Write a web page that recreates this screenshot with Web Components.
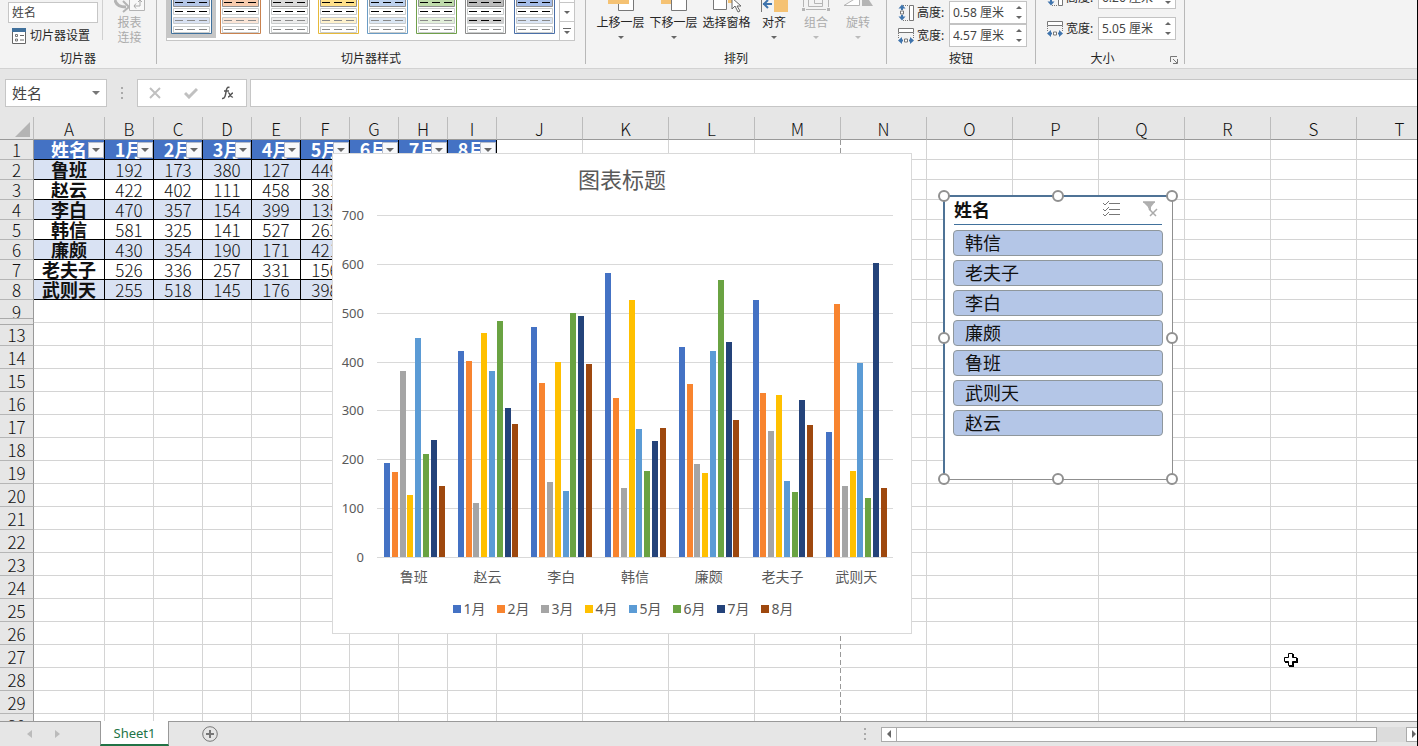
<!DOCTYPE html>
<html lang="zh-CN">
<head>
<meta charset="utf-8">
<title>Sheet1</title>
<style>
  html, body { height: 100%; margin: 0; overflow: hidden; }
  body { font-family: "Noto Sans", "Noto Sans CJK SC", sans-serif; font-size: 12px; color: #262626; }
</style>
</head>
<body>
<sheet-app></sheet-app>

<script>
const MONTHS = ["1月", "2月", "3月", "4月", "5月", "6月", "7月", "8月"]
const COLORS = ["#4472c4", "#f8842f", "#a5a5a5", "#ffc000", "#5b9bd5", "#6aa342", "#24437a", "#9e480e"]
const DATA = [
  ["鲁班", 192, 173, 380, 127, 449, 210, 240, 146],
  ["赵云", 422, 402, 111, 458, 381, 484, 304, 273],
  ["李白", 470, 357, 154, 399, 135, 500, 493, 396],
  ["韩信", 581, 325, 141, 527, 263, 175, 238, 265],
  ["廉颇", 430, 354, 190, 171, 421, 566, 441, 281],
  ["老夫子", 526, 336, 257, 331, 156, 134, 322, 271],
  ["武则天", 255, 518, 145, 176, 398, 121, 601, 142]
]

// small helper, every element here has an open shadow root
class BaseElement extends HTMLElement {
  connectedCallback() {
    if (this.shadowRoot) return
    this.attachShadow({ mode: "open" })
    this.shadowRoot.innerHTML = `
    <style>
      * { box-sizing: border-box; }
      :host { box-sizing: border-box; }
      button, input { font: inherit; color: inherit; margin: 0; padding: 0; border: 0; background: none; }
      svg { display: block; flex: none; }
    </style>` + this.render()
  }
}

// ribbon ----------------------------------------------------------------
class RibbonGroup extends BaseElement {
  render() {
    return `
    <style>
      :host { display: flex; flex: none; height: 68px; }
      .group { display: flex; flex-direction: column; }
      .body { display: flex; align-items: flex-end; height: 50px; padding: 0 0 0 8px; }
      :host([pad="wide"]) .body { padding: 0 10px 0 9px; }
      :host([pad="tight"]) .body { padding: 0 7px 0 8px; }
      :host([pad="field"]) .body { padding: 0 8px 0 11px; }
      footer { display: flex; align-items: center; height: 18px; line-height: 18px; }
      footer span { flex: 1; text-align: center; }
      .sep { width: 1px; margin-bottom: 4px; background: #b8b8b8; }
      .more { width: 12px; height: 12px; margin-right: 3px; }
    </style>
    <div class="group">
      <div class="body"><slot></slot></div>
      <footer>
        <span>${this.getAttribute("label")}</span>
        ${this.hasAttribute("launcher") ? `<button class="more" aria-label="更多">
          <svg width="12" height="12" fill="none" stroke="#777"><path d="M1.5 9V3.500H8M4 6l4 4M8.500 6v4.500H4"/></svg>
        </button>` : ""}
      </footer>
    </div>
    <div class="sep"></div>`
  }
}
customElements.define("ribbon-group", RibbonGroup)

class RibbonButton extends BaseElement {
  render() {
    const off = this.hasAttribute("disabled")
    return `
    <style>
      :host { display: block; flex: none; width: 53px; }
      :host([small]) { width: 42px; }
      button { display: flex; flex-direction: column; align-items: center; width: 100%; height: 50px; line-height: 16px; white-space: nowrap; }
      button:disabled { color: #ababab; }
      .icon { height: 15px; }
      .arrow { margin-top: 5px; border: 3px solid transparent; border-top-color: #666; }
      button:disabled .arrow { border-top-color: #bbb; }
    </style>
    <button ${off ? "disabled" : ""}>
      <span class="icon"><slot name="icon"></slot></span>
      <span><slot></slot></span>
      ${this.hasAttribute("plain") ? "" : `<span class="arrow"></span>`}
    </button>`
  }
}
customElements.define("ribbon-button", RibbonButton)

class SizeField extends BaseElement {
  render() {
    const tall = `<path d="M4 2v4M4 11v4" stroke="#3f74ad" stroke-width="2"/><path d="M0.500 4.500 4 0.500l3.500 4zM0.500 12.500 4 16.500l3.500-4z" fill="#3f74ad"/><path d="M2.500 7h3v3h-3zM11.500 1.500h4v15h-4z" fill="#fff" stroke="#777"/><path d="M5 1.500h6M5 16.500h6" stroke="#777" stroke-dasharray="1 1"/>`
    const wide = `<path d="M0.500 1.500h15v4h-15zM6.500 12h3v3h-3z" fill="#fff" stroke="#777"/><path d="M0.500 6v5M15.500 6v5" stroke="#777" stroke-dasharray="1 1"/><path d="M2 13.500h3M11 13.500h3" stroke="#3f74ad" stroke-width="2"/><path d="M4 10 0 13.500 4 17zM12 10l4 3.500L12 17z" fill="#3f74ad"/>`
    return `
    <style>
      :host { display: flex; align-items: center; gap: 3px; height: 23px; }
      label { width: 29px; white-space: nowrap; line-height: 20px; }
      .box { display: flex; width: 78px; height: 23px; border: 1px solid #c3c3c3; background: #fff; }
      input { flex: 1; min-width: 0; padding: 0 0 2px 3px; color: #444; outline: 0; }
      .spin { display: flex; flex-direction: column; width: 15px; }
      .spin button { flex: 1; display: grid; place-items: center; }
    </style>
    <svg width="16" height="18" fill="none">${this.getAttribute("kind") === "tall" ? tall : wide}</svg>
    <label for="field">${this.getAttribute("label")}</label>
    <div class="box">
      <input id="field" type="text" value="${this.getAttribute("value")}">
      <div class="spin">
        <button aria-label="增加"><svg width="6" height="3" fill="#666"><path d="M0 3 3 0l3 3z"/></svg></button>
        <button aria-label="减少"><svg width="6" height="3" fill="#666"><path d="M0 0l3 3 3-3z"/></svg></button>
      </div>
    </div>`
  }
}
customElements.define("size-field", SizeField)

class StyleGallery extends BaseElement {
  thumb([line, head, band, dark]) {
    const dashes = (y, color) => `<path d="M4 ${y}h8M16 ${y}h8M28 ${y}h8" stroke="${color}"/>`
    return `
    <svg width="41" height="34">
      <path d="M0.500 0v33.500h40V0" fill="#fff" stroke="${line}"/>
      <path d="M2.500 -1h36v7.500h-36z" fill="${head}" stroke="#8e8e8e"/>
      <path d="M2.500 8.500h36v6h-36zM2.500 26.500h36v6h-36z" fill="#fff" stroke="#c9cccc"/>
      <path d="M2.500 17.500h36v6h-36z" fill="${band}" stroke="#c9cccc"/>
      ${dashes(2.5, "#000")}${dashes(11.5, "#000")}${dashes(20.5, dark || "#888")}${dashes(29.5, "#888")}
    </svg>`
  }
  render() {
    const styles = [
      ["#41719c", "#b4c6e7", "#d9e2f3"],
      ["#c9824f", "#f8cbad", "#fbe5d6"],
      ["#a0a0a0", "#dbdbdb", "#ededed"],
      ["#e6b93a", "#ffe18a", "#fff2cc"],
      ["#6b9cc4", "#bdd1ee", "#dbe7f4"],
      ["#70a04a", "#bfdcab", "#e2efda"],
      ["#8b8b8b", "#bcbcbc", "#d0d0d0", "#000"],
      ["#4a6fa8", "#a5bde9", "#dae5f5"]
    ]
    return `
    <style>
      :host { display: flex; height: 41px; margin-bottom: 9px; border: 1px solid #c6c6c6; border-top: 0; background: #fff; }
      .item { display: flex; justify-content: center; align-items: flex-start; width: 49px; height: 38px; }
      .item.on { background: #c6c6c6; }
      .scroll { display: flex; flex-direction: column; width: 15px; border-left: 1px solid #c6c6c6; }
      .scroll button { display: grid; place-items: center; height: 19px; border-top: 1px solid #c6c6c6; }
      .scroll button:first-child { height: 2px; border: 0; }
    </style>
    ${styles.map((s, i) => `<button class="item ${i ? "" : "on"}" aria-label="样式 ${i + 1}">${this.thumb(s)}</button>`).join("")}
    <div class="scroll">
      <button aria-label="上"></button>
      <button aria-label="下"><svg width="6" height="3" fill="#666"><path d="M0 0l3 3 3-3z"/></svg></button>
      <button aria-label="其他"><svg width="8" height="7" fill="#666"><path d="M0 0h8v1H0zM1 3l3 3 3-3z"/></svg></button>
    </div>`
  }
}
customElements.define("style-gallery", StyleGallery)

class AppRibbon extends BaseElement {
  render() {
    return `
    <style>
      :host { display: flex; flex: none; height: 69px; overflow: hidden; background: #f3f3f3; border-bottom: 1px solid #d2d2d2; }
      .caption { display: flex; flex-direction: column; gap: 4px; width: 94px; padding-bottom: 6px; }
      .caption input { width: 90px; height: 21px; padding: 0 0 2px 3px; border: 1px solid #c6c6c6; background: #fff; color: #444; outline: 0; }
      .caption button { display: flex; align-items: center; gap: 3px; height: 17px; margin-left: 4px; line-height: 17px; white-space: nowrap; }
      .line { width: 1px; height: 40px; margin-bottom: 10px; background: #d0d0d0; }
      .report { width: 53px; height: 50px; line-height: 15px; color: #ababab; display: flex; flex-direction: column; align-items: center; gap: 2px; }
      .fields { display: flex; flex-direction: column; padding-bottom: 3px; }
      .fields.loose { gap: 8px; padding-bottom: 10px; }
    </style>
    <ribbon-group label="切片器">
      <div class="caption">
        <input type="text" value="姓名" aria-label="切片器题注">
        <button>
          <svg width="15" height="16" fill="none"><path d="M0.500 1v14.500h13V1" fill="#fff" stroke="#666"/><path d="M0 0h14v4H0z" fill="#41719c"/><path d="M3.500 6.500h2v2h-2zM3.500 11h2v2h-2z" stroke="#777"/><path d="M8 7.500h4M8 12h4" stroke="#666"/></svg>
          切片器设置
        </button>
      </div>
      <div class="line"></div>
      <button class="report" disabled>
        <svg width="31" height="13" fill="none"><path d="M1 0c1 5 5 7 11 7" stroke="#b4b4b4" stroke-width="3"/><path d="M9 1l6 6-6 5" stroke="#b4b4b4" stroke-width="2"/><path d="M15.500 -1v11.500h15V-1" fill="#f8f8f8" stroke="#b4b4b4"/><path d="M20 6h6V0M22 3.500 20 6l2 2.500M24 2l2-2 2 2" stroke="#aaa"/></svg>
        <span>报表<br>连接</span>
      </button>
    </ribbon-group>
    <ribbon-group label="切片器样式" pad="wide">
      <style-gallery></style-gallery>
    </ribbon-group>
    <ribbon-group label="排列" pad="tight">
      <ribbon-button>
        <svg slot="icon" width="26" height="11" fill="none"><path d="M10.500 -1v11.500h15V-1" fill="#fff" stroke="#777"/><path d="M0 0h21v4H0z" fill="#f5c273"/></svg>
        上移一层
      </ribbon-button>
      <ribbon-button>
        <svg slot="icon" width="26" height="11" fill="none"><path d="M0 0h20v4H0z" fill="#f5c273"/><path d="M10.500 -1v11.500h15V-1" fill="#fff" stroke="#777"/></svg>
        下移一层
      </ribbon-button>
      <ribbon-button plain>
        <svg slot="icon" width="28" height="13" fill="none"><path d="M0.500 -1v10.500h13V-1" fill="#fff" stroke="#777"/><path d="M15 0h4v3h-4z" fill="#f5c273"/><path d="M19 -2v11l3-3 3 6 2-1-3-5h4z" fill="#fff" stroke="#666"/></svg>
        选择窗格
      </ribbon-button>
      <ribbon-button small>
        <svg slot="icon" width="27" height="12" fill="none"><path d="M0.500 0v12" stroke="#777"/><path d="M2 4h9M7 0 3 4l4 4" stroke="#3f74ad" stroke-width="2"/><path d="M13 0h14v12H13z" fill="#f5c273"/></svg>
        对齐
      </ribbon-button>
      <ribbon-button small disabled>
        <svg slot="icon" width="28" height="12" fill="none" stroke="#b5b5b5"><path d="M1.500 0v7M26.500 0v7M4 9.500h20M6.500 0v6.500h14V0M12.500 0v3.500h8"/><path d="M0 8h3v3H0zM25 8h3v3h-3z" fill="#b5b5b5" stroke="none"/></svg>
        组合
      </ribbon-button>
      <ribbon-button small disabled>
        <svg slot="icon" width="31" height="7" fill="none"><path d="M1 5.500h15.500V-4z" fill="#fff" stroke="#b5b5b5"/><path d="M19 0h7l4 6H19z" fill="#b5b5b5"/></svg>
        旋转
      </ribbon-button>
    </ribbon-group>
    <ribbon-group label="按钮" pad="field">
      <div class="fields">
        <size-field kind="tall" label="高度:" value="0.58 厘米"></size-field>
        <size-field kind="wide" label="宽度:" value="4.57 厘米"></size-field>
      </div>
    </ribbon-group>
    <ribbon-group label="大小" pad="field" launcher>
      <div class="fields loose">
        <size-field kind="tall" label="高度:" value="6.26 厘米"></size-field>
        <size-field kind="wide" label="宽度:" value="5.05 厘米"></size-field>
      </div>
    </ribbon-group>`
  }
}
customElements.define("app-ribbon", AppRibbon)

// formula bar ----------------------------------------------------------------
class FormulaBar extends BaseElement {
  render() {
    return `
    <style>
      :host { display: flex; flex: none; height: 48px; padding: 10px 0 10px 5px; background: #e6e6e6; }
      .name { display: flex; width: 102px; border: 1px solid #c6c6c6; background: #fff; }
      .name input { flex: 1; min-width: 0; padding: 0 0 2px 6px; font-size: 15px; color: #444; outline: 0; }
      .name button { width: 20px; display: grid; place-items: center; }
      .dots { width: 30px; display: grid; place-items: center; }
      .tools { display: flex; align-items: center; justify-content: space-around; width: 110px; border: 1px solid #c6c6c6; background: #fff; }
      .formula { flex: 1; min-width: 0; margin-left: 3px; padding: 0 6px; border: 1px solid #c6c6c6; border-right: 0; background: #fff; outline: 0; }
    </style>
    <div class="name">
      <input type="text" value="姓名" aria-label="名称框">
      <button aria-label="展开"><svg width="8" height="4" fill="#777"><path d="M0 0h8L4 4z"/></svg></button>
    </div>
    <div class="dots"><svg width="2" height="12" fill="#aaa"><path d="M0 0h2v2H0zM0 5h2v2H0zM0 10h2v2H0z"/></svg></div>
    <div class="tools">
      <button aria-label="取消"><svg width="12" height="12" stroke="#c0c0c0" stroke-width="2"><path d="M1 1l10 10M11 1 1 11"/></svg></button>
      <button aria-label="输入"><svg width="14" height="12" fill="none" stroke="#c0c0c0" stroke-width="3"><path d="M1 6l4 4 8-8"/></svg></button>
      <button aria-label="插入函数"><svg width="14" height="14" fill="none" stroke="#555"><path d="M8.500 1.500C6 0.500 5.500 3 5 6S4 13 1 12.500M3 5h5" stroke-width="1.500"/><path d="M7 7c2-1 2 5 5 4M12 7c-2 0-3 4-5 4" stroke-width="1.300"/></svg></button>
    </div>
    <input class="formula" type="text" aria-label="编辑栏">`
  }
}
customElements.define("formula-bar", FormulaBar)

// grid ----------------------------------------------------------------
class SheetGrid extends BaseElement {
  render() {
    const letters = "ABCDEFGHIJKLMNOPQRST".split("")
    const rows = [1, 2, 3, 4, 5, 6, 7, 8, 9]
    for (let n = 13; n <= 30; n++) rows.push(n)

    const cells = (n) => letters.map((l, i) => {
      if (n > 8 || i > 8) return "<td></td>"
      if (n === 1) {
        return `<td class="d">${i ? MONTHS[i - 1] : "姓名"}<button aria-label="筛选"><svg width="8" height="4" fill="#666"><path d="M0 0h8L4 4z"/></svg></button></td>`
      }
      return `<td class="d">${DATA[n - 2][i]}</td>`
    }).join("")

    return `
    <style>
      :host { display: block; font-family: "Noto Sans CJK SC", sans-serif; font-size: 17px; font-weight: 300; color: #111; }
      table { position: relative; table-layout: fixed; width: 1443px; border-collapse: separate; border-spacing: 0; background: #fff; }
      th, td { position: relative; padding: 2px 0 0; height: 23px; line-height: 20px; text-align: center; white-space: nowrap; border-right: 1px solid #d4d4d4; border-bottom: 1px solid #d4d4d4; }
      th { font-weight: 300; background: #e6e6e6; }
      thead th { border-right-color: #bcbcbc; border-bottom-color: #999; }
      tbody th { border-right-color: #999; border-bottom-color: #b5b5b5; }
      .corner svg { margin: 0 3px 0 auto; }
      .data th, .data td { height: 20px; padding: 0; line-height: 19px; }
      .data .d { border-color: #000; }
      .data:nth-child(even) .d { background: #d9e2f3; }
      .data .d:nth-child(2) { font-size: 18px; font-weight: 700; }
      .data:first-child .d { background: #4472c4; color: #fff; font-size: 18px; font-weight: 700; }
      td button { position: absolute; right: 0; bottom: 1px; width: 16px; height: 16px; display: grid; place-items: center; border: 1px solid #b5bccb; background: #f8f9fb; }
      /* rows 10-12 are hidden, the header shows a double line there */
      .folded th::after { content: ""; position: absolute; z-index: 1; left: 0; right: 0; bottom: -3px; height: 5px; border: solid #aaa; border-width: 1px 0; background: #e6e6e6; }
      .break { position: absolute; top: 23px; bottom: 0; left: 840px; width: 1px; background: repeating-linear-gradient(#999 0 5px, #fff 5px 8px); }
    </style>
    <table>
      <colgroup><col style="width:34px"><col style="width:71px">${'<col style="width:49px">'.repeat(8)}${'<col style="width:86px">'.repeat(11)}</colgroup>
      <thead><tr><th class="corner"><svg width="15" height="15" fill="#b4b4b4"><path d="M15 0v15H0z"/></svg></th>${letters.map((l) => `<th>${l}</th>`).join("")}</tr></thead>
      <tbody>${rows.map((n) => `<tr class="${n < 9 ? "data" : n === 9 ? "folded" : ""}"><th>${n}</th>${cells(n)}</tr>`).join("")}</tbody>
    </table>
    <div class="break"></div>`
  }
}
customElements.define("sheet-grid", SheetGrid)

// chart ----------------------------------------------------------------
class BarChart extends BaseElement {
  render() {
    const max = 700
    const height = 342
    const band = 516 / DATA.length
    let bars = ""
    DATA.forEach((row, i) => {
      row.slice(1).forEach((value, j) => {
        const h = Math.round(value / max * height)
        bars += `<rect x="${Math.round(i * band + 7 + j * 7.8)}" y="${height - h}" width="6" height="${h}" fill="${COLORS[j]}"/>`
      })
    })
    let lines = ""
    let ticks = ""
    for (let v = max; v >= 0; v -= 100) {
      lines += `<rect x="0" y="${Math.round(height - v / max * height)}" width="516" height="1" fill="#d9d9d9"/>`
      ticks += `<span>${v}</span>`
    }
    return `
    <style>
      :host { display: flex; flex-direction: column; width: 580px; height: 481px; border: 1px solid #d9d9d9; background: #fff; color: #595959; }
      h2 { margin: 10px 0 15px; font-size: 22px; line-height: 30px; font-weight: 400; text-align: center; }
      .plot { display: flex; gap: 13px; }
      .ticks { display: flex; flex-direction: column; justify-content: space-between; width: 31px; height: 354px; text-align: right; font-size: 13px; line-height: 12px; }
      .area { padding-top: 6px; }
      .names { display: grid; grid-template-columns: repeat(7, 1fr); width: 516px; margin: 3px 0 0 44px; font-size: 14px; line-height: 22px; text-align: center; }
      .legend { display: flex; justify-content: center; gap: 13px; margin-top: 10px; font-size: 14px; line-height: 22px; }
      .legend span { display: flex; align-items: center; gap: 3px; width: 31px; white-space: nowrap; }
      i { flex: none; width: 8px; height: 8px; }
    </style>
    <h2>图表标题</h2>
    <div class="plot">
      <div class="ticks">${ticks}</div>
      <div class="area"><svg width="516" height="343" shape-rendering="crispEdges">${lines}${bars}</svg></div>
    </div>
    <div class="names">${DATA.map((row) => `<span>${row[0]}</span>`).join("")}</div>
    <div class="legend">${MONTHS.map((m, i) => `<span><i style="background:${COLORS[i]}"></i>${m}</span>`).join("")}</div>`
  }
}
customElements.define("bar-chart", BarChart)

// slicer ----------------------------------------------------------------
class DataSlicer extends BaseElement {
  render() {
    const names = ["韩信", "老夫子", "李白", "廉颇", "鲁班", "武则天", "赵云"]
    return `
    <style>
      :host { display: block; width: 230px; height: 285px; padding: 0 10px; border: 1px solid #8f8f8f; border-top-color: #4f7396; border-left-color: #4f7396; box-shadow: inset 1px 1px #4f7396; background: #fff; color: #111; font-family: "Noto Sans CJK SC", sans-serif; font-size: 18px; }
      header { display: flex; align-items: center; height: 29px; margin: 0 0 5px; padding-bottom: 3px; border-bottom: 1px solid #41719c; }
      h3 { flex: 1; margin: 0; font-size: 18px; line-height: 24px; font-weight: 700; }
      header button { margin: 0 3px 0 19px; }
      .list { display: flex; flex-direction: column; gap: 4px; margin: 0 -1px; }
      .list button { height: 26px; padding: 0 0 2px 11px; line-height: 20px; text-align: left; border: 1px solid #8f979c; border-radius: 4px; background: #b4c6e7; }
      i { position: absolute; width: 12px; height: 12px; margin: -6px; border: 2px solid #909090; border-radius: 50%; background: #fff; }
    </style>
    <header>
      <h3>姓名</h3>
      <button aria-label="多选"><svg width="17" height="16" fill="none" stroke="#777"><path d="M6 2.500h11M6 8.500h11M6 13.500h11" /><path d="M0 2l2 2 4-4M0 8l2 2 4-4M0 13l2 2 4-4"/></svg></button>
      <button aria-label="清除筛选器"><svg width="17" height="16" fill="none"><path d="M1 1h12L9 6v4l-3-3V6z" fill="#b0b0b0"/><path d="M1 1h12M7 8l7 7M15 8l-7 7" stroke="#aaa" stroke-width="1.500"/></svg></button>
    </header>
    <div class="list">${names.map((n) => `<button>${n}</button>`).join("")}</div>
    ${[0, 50, 100].map((x) => [0, 50, 100].map((y) => x === 50 && y === 50 ? "" : `<i style="left:${x}%;top:${y}%"></i>`).join("")).join("")}`
  }
}
customElements.define("data-slicer", DataSlicer)

// bottom bar ----------------------------------------------------------------
class SheetTabs extends BaseElement {
  render() {
    return `
    <style>
      :host { display: flex; flex: none; align-items: center; height: 25px; background: #e6e6e6; border-top: 1px solid #999; }
      nav { display: flex; justify-content: space-between; width: 100px; padding: 0 40px 0 27px; }
      .tab { align-self: stretch; width: 69px; margin-top: -1px; border: 1px solid #999; border-top: 0; border-bottom: 2px solid #217346; background: #fff; color: #217346; font-size: 13px; line-height: 22px; }
      .add { margin-left: 33px; }
      .dots { margin-left: auto; margin-right: 15px; }
      .scroll { display: flex; flex: none; width: 541px; height: 15px; margin-right: -5px; background: #dcdcdc; }
      .scroll button { display: grid; place-items: center; width: 16px; border: 1px solid #ababab; background: #fff; }
      .scroll .thumb { width: 481px; margin-left: -1px; }
      .scroll .next { margin-left: auto; }
    </style>
    <nav>
      <button aria-label="上一个"><svg width="5" height="8" fill="#bbb"><path d="M5 0v8L0 4z"/></svg></button>
      <button aria-label="下一个"><svg width="5" height="8" fill="#bbb"><path d="M0 0v8l5-4z"/></svg></button>
    </nav>
    <button class="tab">Sheet1</button>
    <button class="add" aria-label="新工作表"><svg width="16" height="16" fill="none" stroke="#777"><circle cx="8" cy="8" r="7.300"/><path d="M8 4v8M4 8h8" stroke-width="2"/></svg></button>
    <svg class="dots" width="2" height="12" fill="#aaa"><path d="M0 0h2v2H0zM0 5h2v2H0zM0 10h2v2H0z"/></svg>
    <div class="scroll">
      <button aria-label="向左"><svg width="4" height="8" fill="#666"><path d="M4 0v8L0 4z"/></svg></button>
      <button class="thumb" aria-label="滚动条"></button>
      <button class="next" aria-label="向右"><svg width="4" height="8" fill="#666"><path d="M0 0v8l4-4z"/></svg></button>
    </div>`
  }
}
customElements.define("sheet-tabs", SheetTabs)

class SheetApp extends BaseElement {
  render() {
    return `
    <style>
      :host { display: flex; flex-direction: column; height: 100vh; overflow: hidden; border-right: 1px solid #000; background: #e6e6e6; }
      main { position: relative; flex: 1; min-height: 0; overflow: hidden; background: #fff; }
      /* floating objects on the sheet */
      bar-chart { position: absolute; left: 332px; top: 36px; }
      data-slicer { position: absolute; left: 943px; top: 78px; }
      .cursor { position: absolute; left: 1283px; top: 535px; }
    </style>
    <app-ribbon></app-ribbon>
    <formula-bar></formula-bar>
    <main>
      <sheet-grid></sheet-grid>
      <bar-chart></bar-chart>
      <data-slicer></data-slicer>
      <svg class="cursor" width="16" height="16"><path d="M6 2h5v4h4v5h-4v4H6v-4H2V6h4z" fill="#000"/><path d="M5.500 1.500h4v4h4v4h-4v4h-4v-4h-4v-4h4z" fill="#fff" stroke="#000"/></svg>
    </main>
    <sheet-tabs></sheet-tabs>`
  }
}
customElements.define("sheet-app", SheetApp)
</script>
</body>
</html>
